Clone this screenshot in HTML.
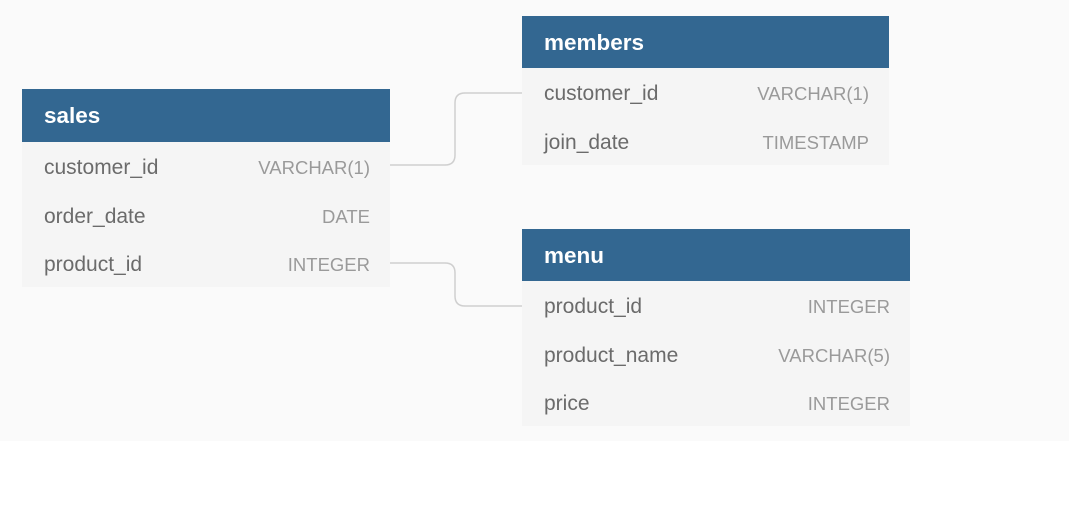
<!DOCTYPE html>
<html><head><style>
body{margin:0;width:1069px;height:524px;background:#fff;position:relative;overflow:hidden;font-family:"Liberation Sans",sans-serif}
.canvas{position:absolute;left:0;top:0;width:1069px;height:441px;background:#fafafa}
.t{position:absolute;background:#f5f5f5}
.h{background:#336791;color:#fff;font-weight:bold;font-size:22.5px;height:53px;line-height:54px;padding-left:22px}
.r{height:48.5px;line-height:51px;padding:0 20px 0 22px;font-size:21px;color:#6b6b6b;display:flex;justify-content:space-between}
.r span:last-child{color:#9a9a9a;font-size:18.5px}
svg{position:absolute;left:0;top:0}
</style></head><body>
<div class="canvas"></div>
<svg width="1069" height="524"><g fill="none" stroke="#cfcfcf" stroke-width="1.5">
<path d="M390 165 H445 Q455 165 455 155 V103 Q455 93 465 93 H522"/>
<path d="M390 263 H445 Q455 263 455 273 V296 Q455 306 465 306 H522"/>
</g></svg>
<div class="t" style="left:22px;top:89px;width:368px;height:198px">
<div class="h">sales</div>
<div class="r"><span>customer_id</span><span>VARCHAR(1)</span></div>
<div class="r"><span>order_date</span><span>DATE</span></div>
<div class="r"><span>product_id</span><span>INTEGER</span></div>
</div>
<div class="t" style="left:522px;top:16px;width:367px;height:149px">
<div class="h" style="height:52px;line-height:53px">members</div>
<div class="r"><span>customer_id</span><span>VARCHAR(1)</span></div>
<div class="r"><span>join_date</span><span>TIMESTAMP</span></div>
</div>
<div class="t" style="left:522px;top:229px;width:388px;height:197px">
<div class="h" style="height:52px;line-height:53px">menu</div>
<div class="r"><span>product_id</span><span>INTEGER</span></div>
<div class="r"><span>product_name</span><span>VARCHAR(5)</span></div>
<div class="r"><span>price</span><span>INTEGER</span></div>
</div>
</body></html>
